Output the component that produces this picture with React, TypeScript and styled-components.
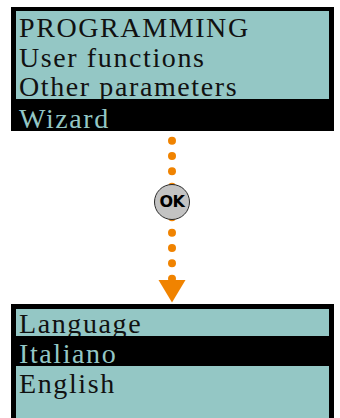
import React from "react";
import styled, { createGlobalStyle } from "styled-components";

const GlobalStyle = createGlobalStyle`
  html, body {
    margin: 0;
    padding: 0;
    background: #fff;
    overflow: hidden;
  }
`;

const TEAL = "#94c7c5";
const ORANGE = "#f08300";

const Page = styled.div`
  width: 340px;
  height: 418px;
  overflow: hidden;
  display: flex;
  flex-direction: column;
`;

const Display = styled.div<{ $top: number; $borderTop: number }>`
  margin: ${(p) => p.$top}px 0 0 11px;
  width: 313px;
  background: #000;
  border-style: solid;
  border-color: #000;
  border-width: ${(p) => p.$borderTop}px 5px 3px 5px;
  display: flex;
  flex-direction: column;
`;

const Row = styled.div<{ $h: number; $base: number; $selected?: boolean }>`
  height: ${(p) => p.$h}px;
  box-sizing: border-box;
  padding: ${(p) => p.$base - 23.5}px 0 0 3px;
  overflow: hidden;
  background: ${(p) => (p.$selected ? "#000" : TEAL)};
  color: ${(p) => (p.$selected ? TEAL : "#111")};
  font-family: "Liberation Serif", "Times New Roman", serif;
  font-size: 28px;
  line-height: 28px;
  letter-spacing: 1.6px;
  white-space: nowrap;
`;

const Connector = styled.div`
  position: relative;
  height: 173px;
  flex-shrink: 0;
`;

const OkBadge = styled.div`
  position: absolute;
  left: 154px;
  top: 52.5px;
  width: 36px;
  height: 36px;
  box-sizing: border-box;
  border-radius: 50%;
  background: #c3c3c3;
  border: 1.5px solid #2a2a2a;
  display: flex;
  align-items: center;
  justify-content: center;
  font-family: "DejaVu Sans", "Liberation Sans", sans-serif;
  font-weight: 700;
  font-size: 16px;
  letter-spacing: -0.5px;
  color: #000;
`;

const dots = Array.from({ length: 10 }, (_, i) => 9.7 + i * 15.33);

function Flow() {
  return (
    <Connector>
      <svg width="340" height="173" style={{ display: "block" }}>
        {dots.map((cy) => (
          <circle key={cy} cx={172} cy={cy} r={4} fill={ORANGE} />
        ))}
        <polygon points="158.5,149 185.5,149 172,171.5" fill={ORANGE} />
      </svg>
      <OkBadge>OK</OkBadge>
    </Connector>
  );
}

export default function App() {
  return (
    <Page>
      <GlobalStyle />
      <Display $top={7} $borderTop={4}>
        <Row $h={30} $base={26}>PROGRAMMING</Row>
        <Row $h={29} $base={26}>User functions</Row>
        <Row $h={29} $base={26}>Other parameters</Row>
        <Row $h={29} $base={29} $selected>
          Wizard
        </Row>
      </Display>
      <Flow />
      <Display $top={0} $borderTop={5}>
        <Row $h={27} $base={24}>Language</Row>
        <Row $h={30} $base={27} $selected>
          Italiano
        </Row>
        <Row $h={60} $base={27}>English</Row>
      </Display>
    </Page>
  );
}
